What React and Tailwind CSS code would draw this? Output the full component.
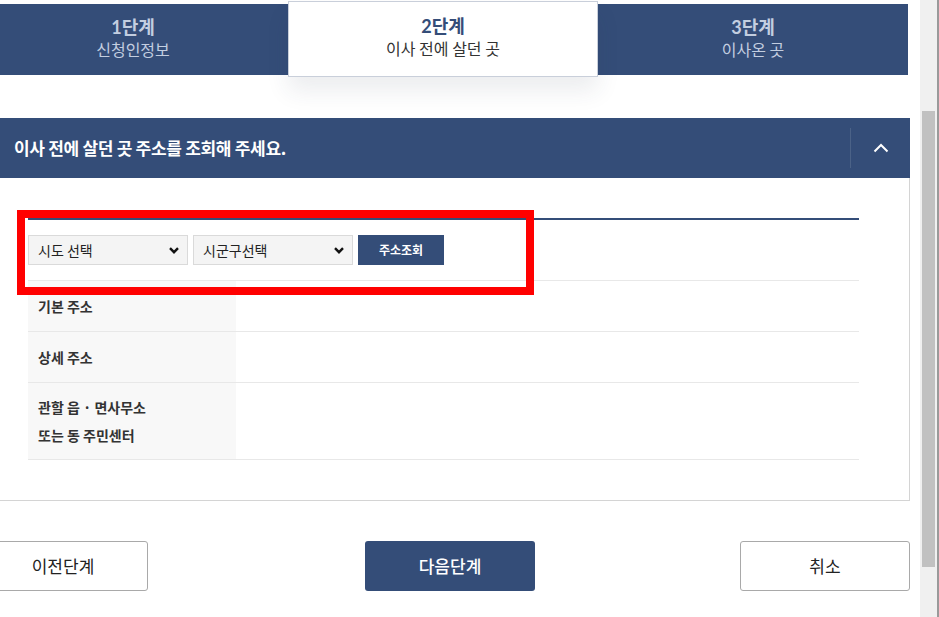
import React from "react";

const font = { fontFamily: "'Noto Sans CJK KR', 'Noto Sans', sans-serif" };

const ChevronDown = () => (
  <svg width="10" height="7" viewBox="0 0 10 7" className="shrink-0">
    <path d="M1 1.2 L5 5.2 L9 1.2" fill="none" stroke="#111" strokeWidth="2.4" />
  </svg>
);

const ChevronUp = () => (
  <svg width="16" height="10" viewBox="0 0 16 10">
    <path d="M1.5 8.5 L8 2 L14.5 8.5" fill="none" stroke="#fff" strokeWidth="2" />
  </svg>
);

const FakeSelect = ({ label }) => (
  <div className="flex items-center justify-between w-[160px] h-[30px] pl-[9px] pr-[8px] bg-[#f4f4f4] border border-[#dadada] text-[14px] text-[#222]">
    <span>{label}</span>
    <ChevronDown />
  </div>
);

const Step = ({ num, name }) => (
  <div className="w-[310px] h-[71px] mt-[3px] bg-[#344d78] flex flex-col items-center pt-[12px]">
    <div className="text-[18px] leading-[22px] font-bold text-[#c3cee0]" style={{ fontFamily: "Lato, 'Noto Sans CJK KR', sans-serif" }}>
      {num}
    </div>
    <div className="text-[16px] leading-[22px] text-[#c3cee0]">{name}</div>
  </div>
);

const App = () => {
  return (
    <div className="relative w-[939px] h-[617px] overflow-hidden bg-white flex" style={font}>
      {/* main column */}
      <div className="w-[920px] h-full overflow-hidden">
        <div className="ml-[-22px] w-[932px]">
          {/* steps */}
          <div className="flex h-[77px] pt-[1px]">
            <Step num="1단계" name="신청인정보" />
            <div className="relative z-10 w-[310px] h-[76px] bg-white border border-[#c9cfda] flex flex-col items-center pt-[13px] shadow-[0_14px_22px_rgba(40,50,80,0.09)]">
              <div className="text-[18px] leading-[22px] font-bold text-[#344d78]" style={{ fontFamily: "Lato, 'Noto Sans CJK KR', sans-serif" }}>
                2단계
              </div>
              <div className="text-[16px] leading-[22px] text-[#333]">이사 전에 살던 곳</div>
            </div>
            <div className="w-[312px]">
              <Step num="3단계" name="이사온 곳" />
            </div>
          </div>

          {/* section header */}
          <div className="mt-[41px] h-[60px] bg-[#344d78] flex items-center">
            <h2 className="flex-1 pl-[36px] text-[17px] font-bold text-white tracking-[-0.3px]">
              이사 전에 살던 곳 주소를 조회해 주세요.
            </h2>
            <div className="w-[60px] h-[40px] border-l border-[#4b6287] flex items-center justify-center">
              <ChevronUp />
            </div>
          </div>

          {/* panel */}
          <div className="border-r border-b border-[#d4d4d4] px-[50px] pt-[40px] pb-[40px]">
            <div className="border-t-2 border-[#344d78] text-[14px] text-[#333]">
              <div className="flex items-center gap-[5px] h-[61px] border-b border-[#e8e8e8]">
                <FakeSelect label="시도 선택" />
                <FakeSelect label="시군구선택" />
                <button className="w-[86px] h-[30px] bg-[#344d78] text-white text-[12px] font-bold">
                  주소조회
                </button>
              </div>
              <div className="flex h-[51px] border-b border-[#e8e8e8]">
                <div className="w-[208px] bg-[#f8f8f8] pl-[10px] flex items-center font-bold">기본 주소</div>
                <div className="flex-1" />
              </div>
              <div className="flex h-[51px] border-b border-[#e8e8e8]">
                <div className="w-[208px] bg-[#f8f8f8] pl-[10px] flex items-center font-bold">상세 주소</div>
                <div className="flex-1" />
              </div>
              <div className="flex h-[77px] border-b border-[#e8e8e8]">
                <div className="w-[208px] bg-[#f8f8f8] pl-[10px] flex flex-col justify-center font-bold leading-[28px]">
                  <span>관할 읍 · 면사무소</span>
                  <span>또는 동 주민센터</span>
                </div>
                <div className="flex-1" />
              </div>
            </div>
          </div>

          {/* buttons */}
          <div className="flex mt-[40px]">
            <button className="w-[170px] h-[50px] border border-[#a9a9a9] rounded-[3px] bg-white text-[17px] text-[#222]">
              이전단계
            </button>
            <button className="ml-[217px] w-[170px] h-[50px] rounded-[3px] bg-[#344d78] text-[17px] text-white font-medium">
              다음단계
            </button>
            <button className="ml-auto w-[170px] h-[50px] border border-[#a9a9a9] rounded-[3px] bg-white text-[17px] text-[#222]">
              취소
            </button>
          </div>
        </div>
      </div>

      {/* scrollbar */}
      <div className="w-[17px] h-full bg-[#f0f0f0] pt-[111px] px-[2px]">
        <div className="h-[456px] bg-[#c1c1c1]" />
      </div>
      <div className="w-[2px] h-full bg-[#9a9a9a]" />

      {/* red annotation box */}
      <div className="absolute left-[17px] top-[210px] w-[517px] h-[85px] border-[8px] border-[#ff0000]" />
    </div>
  );
};

export default App;
